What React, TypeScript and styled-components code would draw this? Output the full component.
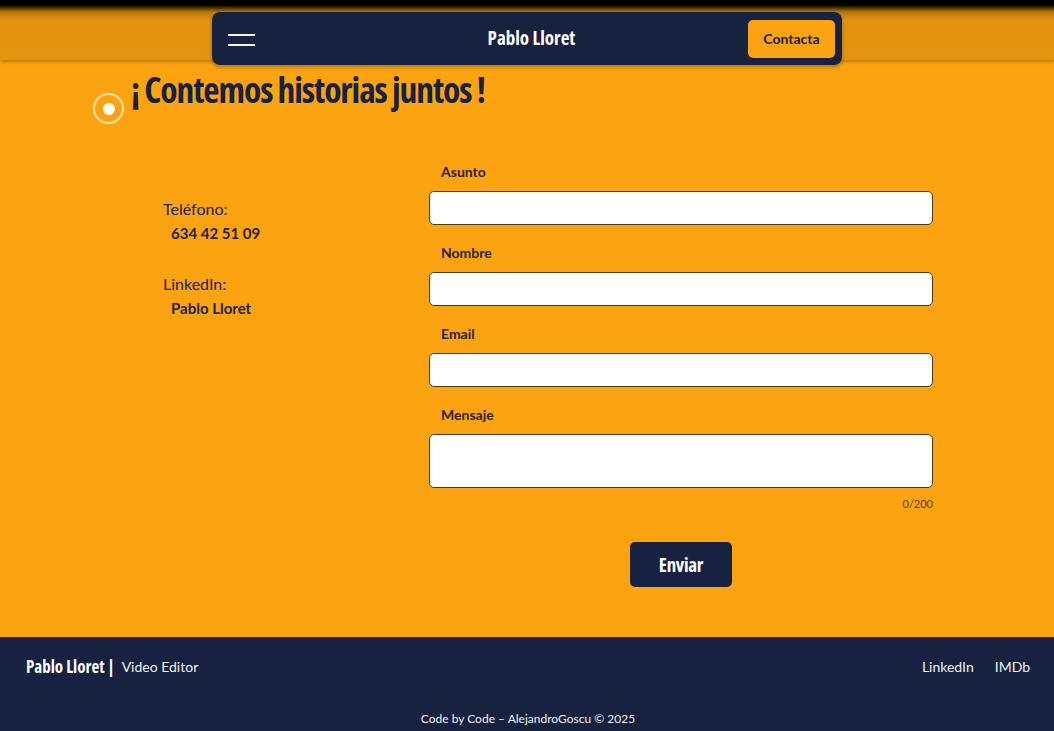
import React from "react";
import styled, { createGlobalStyle } from "styled-components";

const NAVY = "#172140";
const ORANGE = "#fca311";
const COND = `"Open Sans", sans-serif`;
const BODY = `"Lato", "Noto Sans", sans-serif`;

const Global = createGlobalStyle`
  html, body { margin: 0; padding: 0; background: ${ORANGE}; }
  body { font-family: ${BODY}; color: ${NAVY}; }
  * { box-sizing: border-box; }
`;

const Page = styled.div`
  width: 1054px;
  min-height: 731px;
  display: flex;
  flex-direction: column;
  background: ${ORANGE};
`;

const HeaderBand = styled.header`
  height: 60px;
  display: flex;
  justify-content: center;
  align-items: flex-start;
  padding-top: 12px;
  background: linear-gradient(#000 0px, #000 5px, #b8780c 12px, #e3940f 20px, #e5960f 100%);
  box-shadow: 0 2px 3px rgba(90, 55, 0, 0.35);
  position: relative;
  z-index: 2;
`;

const Nav = styled.nav`
  width: 630px;
  height: 53px;
  flex: none;
  background: ${NAVY};
  border-radius: 8px;
  display: grid;
  grid-template-columns: 1fr auto 1fr;
  align-items: center;
  padding: 0 7px 0 16px;
  box-shadow: 0 2px 4px rgba(0, 0, 0, 0.3);
`;

const Burger = styled.button`
  width: 27px;
  height: 12px;
  padding: 0;
  border: none;
  background: none;
  display: flex;
  flex-direction: column;
  justify-content: space-between;
  margin-top: 2px;
  span {
    display: block;
    height: 2px;
    background: #f4f4f4;
  }
`;

const NavTitle = styled.div`
  font-family: ${COND};
  font-stretch: 75%;
  font-weight: 700;
  font-size: 19px;
  color: #fff;
  margin-top: -2px;
`;

const ContactButton = styled.button`
  justify-self: end;
  width: 87px;
  height: 38px;
  border: none;
  border-radius: 5px;
  background: ${ORANGE};
  color: ${NAVY};
  font-family: ${BODY};
  font-weight: 700;
  font-size: 14px;
`;

const Main = styled.main`
  flex: 1;
  padding: 6px 0 50px 93px;
`;

const TitleRow = styled.div`
  display: flex;
  align-items: flex-start;
  gap: 7px;
`;

const Dot = styled.div`
  width: 31px;
  height: 31px;
  margin-top: 27px;
  border-radius: 50%;
  border: 2px solid rgba(255, 236, 210, 0.8);
  display: flex;
  align-items: center;
  justify-content: center;
  &::after {
    content: "";
    width: 12px;
    height: 12px;
    border-radius: 50%;
    background: #fff;
  }
`;

const Title = styled.h1`
  margin: 0;
  height: 46px;
  font-family: ${COND};
  font-stretch: 75%;
  font-weight: 700;
  font-size: 35.5px;
  letter-spacing: -1.1px;
  line-height: 46px;
  color: ${NAVY};
`;

const Content = styled.div`
  display: flex;
  padding-left: 70px;
  margin-top: 38px;
`;

const InfoColumn = styled.div`
  width: 266px;
  padding-top: 36px;
  display: flex;
  flex-direction: column;
  gap: 29px;
`;

const InfoItem = styled.div`
  display: flex;
  flex-direction: column;
`;

const InfoLabel = styled.span`
  font-size: 16px;
  line-height: 22px;
  color: #1e2336;
`;

const InfoValue = styled.span`
  font-size: 15px;
  line-height: 22px;
  font-weight: 700;
  padding-left: 8px;
  padding-top: 2px;
  color: #1e2336;
`;

const Form = styled.form`
  width: 504px;
  display: flex;
  flex-direction: column;
`;

const Field = styled.div<{ $last?: boolean }>`
  display: flex;
  flex-direction: column;
  margin-bottom: ${(p) => (p.$last ? "0" : "18px")};
`;

const Label = styled.label`
  font-size: 14px;
  line-height: 20px;
  font-weight: 700;
  padding-left: 12px;
  margin-bottom: 9px;
  color: #2a2418;
`;

const Input = styled.input`
  height: 34px;
  border: 1px solid #4a3b1c;
  border-radius: 5px;
  background: #fff;
  font-family: ${BODY};
  font-size: 14px;
  padding: 0 10px;
`;

const TextArea = styled.textarea`
  height: 54px;
  border: 1px solid #4a3b1c;
  border-radius: 5px;
  background: #fff;
  font-family: ${BODY};
  font-size: 14px;
  padding: 8px 10px;
  resize: none;
`;

const Counter = styled.div`
  align-self: flex-end;
  margin-top: 9px;
  font-size: 11px;
  line-height: 14px;
  color: #5a4218;
`;

const SubmitButton = styled.button`
  align-self: center;
  margin-top: 31px;
  width: 102px;
  height: 45px;
  border: none;
  border-radius: 5px;
  background: ${NAVY};
  color: #fff;
  font-family: ${COND};
  font-stretch: 75%;
  font-weight: 700;
  font-size: 19px;
  letter-spacing: -0.3px;
`;

const Footer = styled.footer`
  background: ${NAVY};
  border-top: 1px solid #3a3020;
  height: 95px;
  display: flex;
  flex-direction: column;
  padding: 16px 24px 0 26px;
  color: #fff;
`;

const FooterRow = styled.div`
  display: flex;
  justify-content: space-between;
  align-items: center;
  height: 24px;
`;

const Brand = styled.div`
  display: flex;
  align-items: center;
  gap: 7px;
`;

const BrandName = styled.span`
  font-family: ${COND};
  font-stretch: 75%;
  font-weight: 700;
  font-size: 17px;
  color: #fff;
`;

const BrandRole = styled.span`
  font-size: 14px;
  color: #f0f0f4;
`;

const FooterLinks = styled.div`
  display: flex;
  gap: 21px;
  a {
    color: #f0f0f4;
    text-decoration: none;
    font-size: 14px;
  }
`;

const Copyright = styled.div`
  margin-top: 33px;
  text-align: center;
  font-size: 12px;
  color: #f0f0f4;
`;

export default function App() {
  return (
    <Page>
      <Global />
      <HeaderBand>
        <Nav>
          <Burger aria-label="menu">
            <span />
            <span />
          </Burger>
          <NavTitle>Pablo Lloret</NavTitle>
          <ContactButton>Contacta</ContactButton>
        </Nav>
      </HeaderBand>
      <Main>
        <TitleRow>
          <Dot />
          <Title>¡ Contemos historias juntos !</Title>
        </TitleRow>
        <Content>
          <InfoColumn>
            <InfoItem>
              <InfoLabel>Teléfono:</InfoLabel>
              <InfoValue>634 42 51 09</InfoValue>
            </InfoItem>
            <InfoItem>
              <InfoLabel>LinkedIn:</InfoLabel>
              <InfoValue>Pablo Lloret</InfoValue>
            </InfoItem>
          </InfoColumn>
          <Form onSubmit={(e) => e.preventDefault()}>
            <Field>
              <Label>Asunto</Label>
              <Input />
            </Field>
            <Field>
              <Label>Nombre</Label>
              <Input />
            </Field>
            <Field>
              <Label>Email</Label>
              <Input />
            </Field>
            <Field $last>
              <Label>Mensaje</Label>
              <TextArea />
            </Field>
            <Counter>0/200</Counter>
            <SubmitButton type="submit">Enviar</SubmitButton>
          </Form>
        </Content>
      </Main>
      <Footer>
        <FooterRow>
          <Brand>
            <BrandName>Pablo Lloret |</BrandName>
            <BrandRole>Video Editor</BrandRole>
          </Brand>
          <FooterLinks>
            <a href="#">LinkedIn</a>
            <a href="#">IMDb</a>
          </FooterLinks>
        </FooterRow>
        <Copyright>Code by Code – AlejandroGoscu © 2025</Copyright>
      </Footer>
    </Page>
  );
}
